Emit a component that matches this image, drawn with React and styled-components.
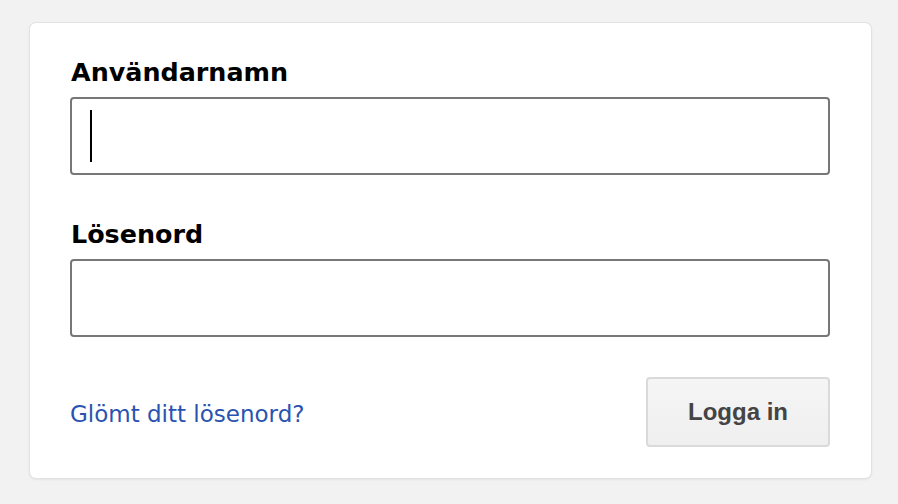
import React from "react";
import styled, { createGlobalStyle } from "styled-components";

const Global = createGlobalStyle`
  html, body { margin: 0; padding: 0; background: #f2f2f2; }
  body { font-family: "DejaVu Sans", "Liberation Sans", sans-serif; }
`;

const Page = styled.div`
  width: 898px;
  height: 504px;
  box-sizing: border-box;
  padding: 23px 27px 26px 30px;
  background: #f2f2f2;
`;

const Card = styled.form`
  box-sizing: border-box;
  width: 841px;
  height: 455px;
  background: #fff;
  border-radius: 6px;
  box-shadow: 0 0 0 1px #e2e2e2, 0 1px 3px rgba(0, 0, 0, 0.12);
  padding: 31px 41px 31px 40px;
  display: flex;
  flex-direction: column;
`;

const Field = styled.div`
  display: flex;
  flex-direction: column;
  margin-bottom: ${(p) => p.$gap || 0}px;
`;

const Label = styled.label`
  font-family: "DejaVu Sans", sans-serif;
  font-weight: 700;
  font-size: 25.4px;
  line-height: 36px;
  color: #000;
  margin-bottom: 7px;
  padding-left: 1px;
`;

const InputWrap = styled.div`
  position: relative;
`;

const Input = styled.input`
  box-sizing: border-box;
  width: 760px;
  height: 78px;
  border: 2px solid #777;
  border-radius: 4px;
  background: #fff;
  font-size: 40px;
  padding: 0 18px;
  outline: none;
  display: block;
`;

const Caret = styled.span`
  position: absolute;
  left: 20px;
  top: 13px;
  width: 2px;
  height: 52px;
  background: #000;
`;

const Actions = styled.div`
  margin-top: auto;
  display: flex;
  align-items: center;
  justify-content: space-between;
`;

const Link = styled.a`
  font-family: "DejaVu Sans", sans-serif;
  font-size: 23px;
  color: #2a53b1;
  text-decoration: none;
  padding-top: 3px;
`;

const Button = styled.button`
  box-sizing: border-box;
  width: 184px;
  height: 70px;
  border: 2px solid #dadada;
  border-radius: 4px;
  background: linear-gradient(#f5f5f5, #efefef);
  font-family: "Liberation Sans", Arial, sans-serif;
  font-weight: 700;
  font-size: 24px;
  color: #444;
  cursor: pointer;
`;

export default function App() {
  return (
    <>
      <Global />
      <Page>
        <Card onSubmit={(e) => e.preventDefault()}>
          <Field $gap={41}>
            <Label htmlFor="user">Användarnamn</Label>
            <InputWrap>
              <Input id="user" type="text" />
              <Caret />
            </InputWrap>
          </Field>
          <Field>
            <Label htmlFor="pass">Lösenord</Label>
            <InputWrap>
              <Input id="pass" type="password" />
            </InputWrap>
          </Field>
          <Actions>
            <Link href="#">Glömt ditt lösenord?</Link>
            <Button type="submit">Logga in</Button>
          </Actions>
        </Card>
      </Page>
    </>
  );
}
